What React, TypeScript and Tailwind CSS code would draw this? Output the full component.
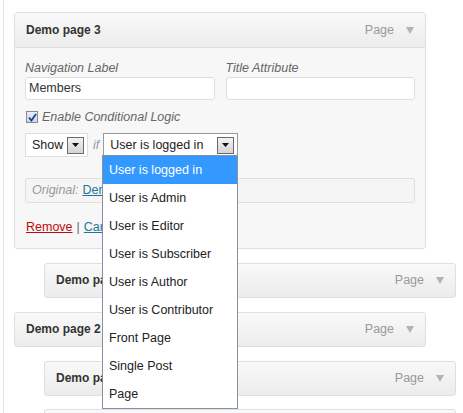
import React from 'react'

const options = [
  'User is logged in',
  'User is Admin',
  'User is Editor',
  'User is Subscriber',
  'User is Author',
  'User is Contributor',
  'Front Page',
  'Single Post',
  'Page',
]

function Arrow() {
  return (
    <span className="flex h-[17px] w-[17px] items-center justify-center border border-[#6b6b6b] bg-gradient-to-b from-[#f2f2f2] to-[#d4d4d4]">
      <svg width="7" height="4" viewBox="0 0 7 4">
        <path d="M0 0h7L3.5 4z" fill="#111" />
      </svg>
    </span>
  )
}

function PageTag() {
  return (
    <span className="flex items-center gap-[12px] text-[12.5px] text-[#999]">
      Page
      <svg width="8" height="7" viewBox="0 0 8 7">
        <path d="M0 0h8L4 7z" fill="#b3b3b3" />
      </svg>
    </span>
  )
}

function ItemHeader({ title }: { title?: string }) {
  return (
    <div className="flex h-[35px] items-center justify-between rounded-[3px] border border-[#dfdfdf] bg-gradient-to-b from-[#f9f9f9] to-[#ececec] pl-[11px] pr-[11px]">
      <span className="text-[12px] font-bold text-[#333]">{title}</span>
      {title && <PageTag />}
    </div>
  )
}

export default function App() {
  return (
    <div className="relative h-[413px] w-[463px] overflow-hidden bg-white font-['Liberation_Sans',Arial,sans-serif]">
      <div className="ml-[3px] h-full border-l border-[#e3e3e3] pt-[12px]">
        {/* open item */}
        <div className="ml-[10px] w-[412px] rounded-[3px] border border-[#dfdfdf] bg-[#f7f7f7]">
          <div className="flex h-[35px] items-center justify-between border-b border-[#dfdfdf] bg-gradient-to-b from-[#f9f9f9] to-[#ececec] pl-[11px] pr-[11px]">
            <span className="text-[12px] font-bold text-[#333]">Demo page 3</span>
            <PageTag />
          </div>
          <div className="px-[10px] pb-[11px] pt-[12px] text-[12.5px]">
            <div className="flex gap-[11px]">
              <div className="w-[190px]">
                <div className="h-[17px] italic leading-[16px] text-[#666]">Navigation Label</div>
                <div className="flex h-[23px] items-center rounded-[3px] border border-[#dfdfdf] bg-white pl-[3px] text-[#333]">
                  Members
                </div>
              </div>
              <div className="w-[190px]">
                <div className="h-[17px] italic leading-[16px] text-[#666]">Title Attribute</div>
                <div className="h-[23px] rounded-[3px] border border-[#dfdfdf] bg-white" />
              </div>
            </div>
            <div className="mt-[9px] flex h-[16px] items-center gap-[4px] pl-[1px]">
              <span className="flex h-[12px] w-[12px] items-center justify-center border border-[#8a8a8a] bg-gradient-to-b from-[#e8eef8] to-[#c9d6ea]">
                <svg width="9" height="9" viewBox="0 0 9 9">
                  <path d="M1 4.5l2.4 3L8 1" stroke="#1c3f8f" strokeWidth="1.8" fill="none" />
                </svg>
              </span>
              <span className="italic text-[#666]">Enable Conditional Logic</span>
            </div>
            <div className="mt-[8px] flex items-center">
              <div className="flex h-[24px] w-[63px] items-center justify-between border border-[#dfdfdf] bg-white pl-[6px] pr-[3px] text-[#222]">
                Show
                <Arrow />
              </div>
              <span className="ml-[5px] mr-[4px] italic text-[#999]">if</span>
              <div className="flex h-[24px] w-[135px] items-center justify-between border border-[#9a9a9a] bg-white pl-[6px] pr-[3px] text-[#222]">
                User is logged in
                <Arrow />
              </div>
            </div>
            <div className="mt-[21px] flex h-[25px] items-center gap-[4px] rounded-[3px] border border-[#dfdfdf] bg-[#f5f5f5] pl-[6px]">
              <span className="italic text-[#999]">Original:</span>
              <span className="text-[#21759b] underline">Demo page 3</span>
            </div>
            <div className="mt-[15px] flex items-center gap-[4px] pl-[1px]">
              <span className="text-[#bc0b0b] underline decoration-[#bc0b0b]">Remove</span>
              <span className="text-[#666]">|</span>
              <span className="text-[#21759b] underline">Cancel</span>
            </div>
          </div>
        </div>

        <div className="ml-[40px] mt-[14px] w-[412px]">
          <ItemHeader title="Demo page 1" />
        </div>
        <div className="ml-[10px] mt-[14px] w-[412px]">
          <ItemHeader title="Demo page 2" />
        </div>
        <div className="ml-[40px] mt-[14px] w-[412px]">
          <ItemHeader title="Demo page 4" />
        </div>
        <div className="ml-[40px] mt-[13px] w-[412px]">
          <ItemHeader />
        </div>
      </div>

      {/* open dropdown list */}
      <div className="absolute left-[102px] top-[155px] w-[136px] border border-[#8493a3] bg-white">
        {options.map((o, i) => (
          <div
            key={o}
            className={`flex h-[28px] items-center pl-[6px] text-[12.5px] ${
              i === 0 ? 'bg-[#3399ff] text-white' : 'text-[#222]'
            }`}
          >
            {o}
          </div>
        ))}
      </div>
    </div>
  )
}
